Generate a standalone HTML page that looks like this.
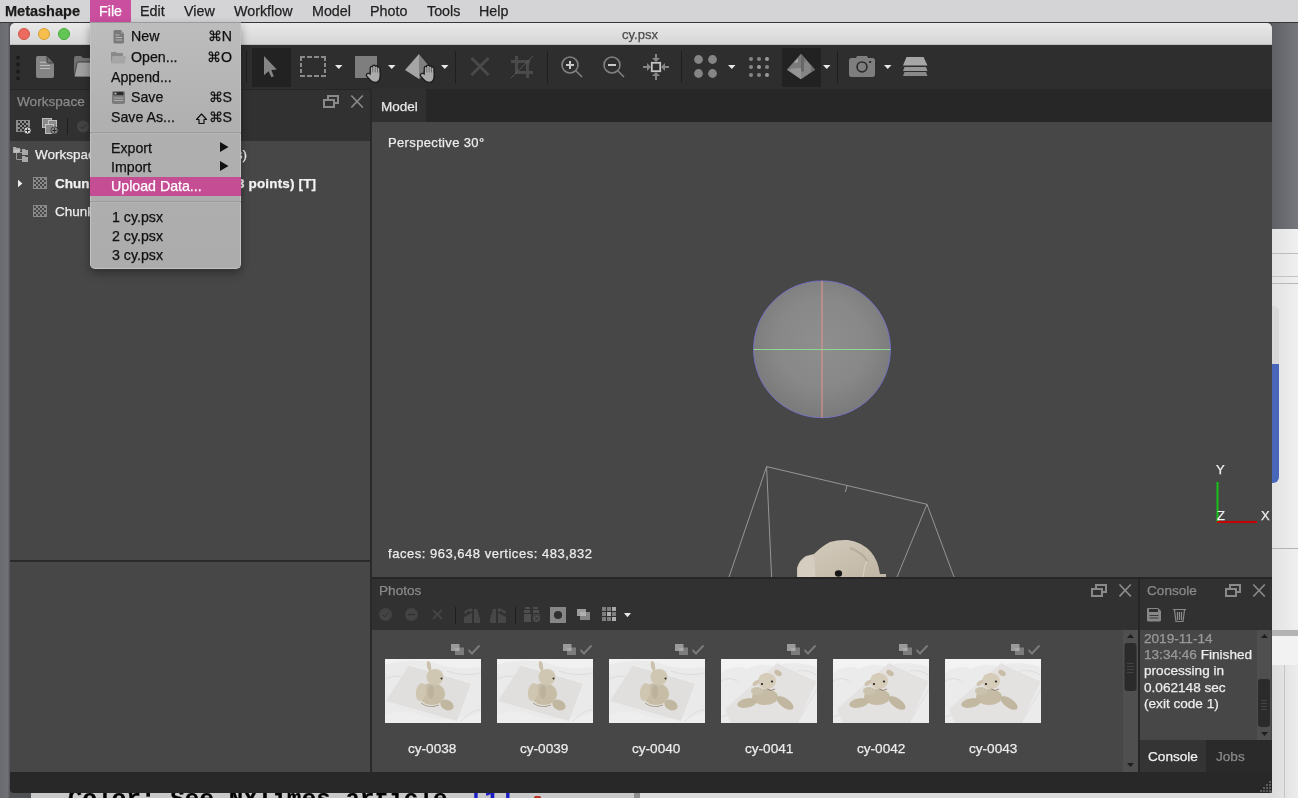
<!DOCTYPE html>
<html><head><meta charset="utf-8">
<style>
*{margin:0;padding:0;box-sizing:border-box}
html,body{width:1298px;height:798px;overflow:hidden;background:#66686d;font-family:"Liberation Sans",sans-serif;position:relative;-webkit-font-smoothing:antialiased}
.a{position:absolute}
.t{position:absolute;white-space:pre;line-height:1;-webkit-text-stroke:0.25px currentColor;will-change:transform}
svg{position:absolute;overflow:visible}
</style></head><body>
<!-- desktop -->
<div class="a" style="left:0;top:22px;width:1298px;height:776px;background:linear-gradient(90deg,#6a6b70 0,#707176 8px,#5d5e62 9px,#505155 10px)"></div>
<!-- background doc bottom -->
<div class="a" style="left:31px;top:793px;width:605px;height:5px;background:#c9c9c9;overflow:hidden">
 <div class="t" style="left:37px;top:-5px;font-family:'Liberation Mono',monospace;font-weight:700;font-size:24px;color:#000;letter-spacing:0.2px">Color: See NYTimes article</div>
 <div class="t" style="left:439px;top:-5px;font-family:'Liberation Mono',monospace;font-weight:700;font-size:24px;color:#1a1ac8;letter-spacing:0.2px">[1]</div>
 <div class="a" style="left:503px;top:3px;width:7px;height:3px;background:#c0302a;border-radius:3px"></div>
</div>
<div class="a" style="left:634px;top:793px;width:6px;height:5px;background:#8e8e8e"></div>
<div class="a" style="left:640px;top:793px;width:632px;height:5px;background:#dcdcdc"></div>
<!-- right background window -->
<div class="a" style="left:1272px;top:22px;width:26px;height:207px;background:linear-gradient(90deg,#5f6065,#76777c)"></div>
<div class="a" style="left:1272px;top:229px;width:26px;height:569px;background:linear-gradient(90deg,#e2e2e2,#f0f0f0)"></div>
<div class="a" style="left:1272px;top:253px;width:26px;height:1px;background:#bcbcbc"></div>
<div class="a" style="left:1272px;top:276px;width:26px;height:1px;background:#c4c4c4"></div>
<div class="a" style="left:1272px;top:283px;width:26px;height:1px;background:#b8b8b8"></div>
<div class="a" style="left:1264px;top:306px;width:15px;height:177px;background:#d8d8d8;border-radius:6px"></div>
<div class="a" style="left:1264px;top:364px;width:15px;height:119px;background:#4866ba;border-radius:0 0 6px 6px"></div>
<div class="a" style="left:1272px;top:548px;width:26px;height:1px;background:#b4b4b4"></div>
<div class="a" style="left:1272px;top:630px;width:26px;height:6px;background:#b3b3b3"></div>
<div class="a" style="left:1272px;top:636px;width:26px;height:29px;background:#f2f2f2"></div>
<div class="a" style="left:1272px;top:665px;width:26px;height:133px;background:linear-gradient(90deg,#dcdcdc,#ececec)"></div>
<div class="a" style="left:1284px;top:665px;width:1px;height:133px;background:#c4c4c4"></div>

<!-- menubar -->
<div class="a" style="left:0;top:0;width:1298px;height:23px;background:#d4d4d7;border-bottom:1px solid #36363a"></div>
<div class="t" style="left:5px;top:4px;font-size:14.5px;font-weight:700;color:#1a1a1a">Metashape</div>
<div class="a" style="left:90px;top:0;width:41px;height:22px;background:#cb4f9f"></div>
<div class="t" style="left:99px;top:4px;font-size:14.3px;color:#fff">File</div>
<div class="t" style="left:140px;top:4px;font-size:14.3px;color:#222">Edit</div>
<div class="t" style="left:184px;top:4px;font-size:14.3px;color:#222">View</div>
<div class="t" style="left:234px;top:4px;font-size:14.3px;color:#222">Workflow</div>
<div class="t" style="left:312px;top:4px;font-size:14.3px;color:#222">Model</div>
<div class="t" style="left:370px;top:4px;font-size:14.3px;color:#222">Photo</div>
<div class="t" style="left:427px;top:4px;font-size:14.3px;color:#222">Tools</div>
<div class="t" style="left:479px;top:4px;font-size:14.3px;color:#222">Help</div>

<!-- window -->
<div class="a" style="left:10px;top:23px;width:1262px;height:770px;background:#474747;border-radius:5px 5px 4px 4px"></div>
<div class="a" style="left:10px;top:23px;width:1262px;height:22px;background:linear-gradient(#e9e9e9,#d6d6d6);border-bottom:1px solid #bdbdbd;border-radius:5px 5px 0 0"></div>
<div class="a" style="left:18px;top:28px;width:12px;height:12px;border-radius:50%;background:#ed6a5e;border:0.5px solid #d25448"></div>
<div class="a" style="left:38px;top:28px;width:12px;height:12px;border-radius:50%;background:#f5be4f;border:0.5px solid #d9a030"></div>
<div class="a" style="left:58px;top:28px;width:12px;height:12px;border-radius:50%;background:#62c655;border:0.5px solid #4aa83c"></div>
<div class="t" style="left:622px;top:28px;font-size:13px;color:#4a4a4a">cy.psx</div>

<!-- toolbar -->
<div class="a" style="left:10px;top:45px;width:1262px;height:44px;background:#2e2e2e"></div>




<!-- left dock -->
<div class="a" style="left:10px;top:89px;width:360px;height:52px;background:#313131"></div>
<div class="a" style="left:10px;top:89px;width:1262px;height:1px;background:#262626"></div>
<div class="t" style="left:17px;top:94.5px;font-size:13.6px;color:#8a8a8a">Workspace</div>
<div class="a" style="left:10px;top:141px;width:360px;height:419px;background:#474747"></div>
<div class="a" style="left:10px;top:560px;width:360px;height:2px;background:#2a2a2a"></div>
<div class="a" style="left:10px;top:562px;width:360px;height:210px;background:#474747"></div>
<!-- vertical splitter -->
<div class="a" style="left:370px;top:89px;width:2px;height:683px;background:#292929"></div>

<!-- model tab bar -->
<div class="a" style="left:372px;top:89px;width:900px;height:33px;background:#272727"></div>
<div class="a" style="left:372px;top:89px;width:54px;height:33px;background:#303030"></div>
<div class="t" style="left:380.5px;top:99.5px;font-size:13.5px;color:#e6e6e6">Model</div>
<!-- viewport -->
<div class="a" style="left:372px;top:122px;width:900px;height:455px;background:#474747"></div>
<div class="t" style="left:388px;top:135.5px;font-size:13px;letter-spacing:0.35px;color:#ececec">Perspective 30°</div>
<div class="t" style="left:388px;top:546.5px;font-size:13px;letter-spacing:0.52px;color:#ececec">faces: 963,648 vertices: 483,832</div>

<!-- horizontal splitter -->
<div class="a" style="left:372px;top:577px;width:900px;height:2px;background:#262626"></div>

<!-- photos panel -->
<div class="a" style="left:372px;top:579px;width:766px;height:51px;background:#313131"></div>
<div class="t" style="left:379px;top:584px;font-size:13.6px;color:#8a8a8a">Photos</div>
<div class="a" style="left:372px;top:630px;width:766px;height:142px;background:#474747"></div>
<div class="a" style="left:1138px;top:579px;width:2px;height:193px;background:#262626"></div>

<!-- console panel -->
<div class="a" style="left:1140px;top:579px;width:132px;height:51px;background:#313131"></div>
<div class="t" style="left:1147px;top:584px;font-size:13.6px;color:#8a8a8a">Console</div>
<div class="a" style="left:1140px;top:630px;width:132px;height:110px;background:#474747"></div>
<div class="a" style="left:1140px;top:740px;width:132px;height:32px;background:#2a2a2a"></div>

<!-- status bar -->
<div class="a" style="left:10px;top:772px;width:1262px;height:21px;background:#282828;border-radius:0 0 4px 4px"></div>
<!-- toolbar icons -->
<svg style="left:0;top:0" width="1298" height="140" viewBox="0 0 1298 140">
 <g fill="#1c1c1c"><circle cx="18" cy="57.5" r="2"/><circle cx="18" cy="64.5" r="2"/><circle cx="18" cy="71.5" r="2"/><circle cx="18" cy="78.5" r="2"/></g>
 <!-- new doc -->
 <path d="M38 56 H47 L54 63 V76 Q54 78 52 78 H38 Q36 78 36 76 V58 Q36 56 38 56 Z" fill="#858585"/>
 <path d="M47 56 V61.5 Q47 63 48.5 63 H54 Z" fill="#6f6f6f" stroke="#2e2e2e" stroke-width="0.8"/>
 <g stroke="#c4c4c4" stroke-width="0.9"><line x1="40" y1="62.3" x2="46.5" y2="62.3"/><line x1="40" y1="65.5" x2="50" y2="65.5"/><line x1="40" y1="68.5" x2="50" y2="68.5"/></g>
 <!-- folder -->
 <path d="M74 58 Q74 56 76 56 H81 L83 58 H92 V76 H74 Z" fill="#707070"/>
 <path d="M77 63 Q77.5 62 79 62 H92 V77 H75 Q74 77 74.3 76 Z" fill="#a0a0a0" stroke="#2e2e2e" stroke-width="0.8"/>
 <!-- separators -->
 <g stroke="#1e1e1e" stroke-width="1"><line x1="246.5" y1="51" x2="246.5" y2="83"/><line x1="455.5" y1="51" x2="455.5" y2="83"/><line x1="547.5" y1="51" x2="547.5" y2="83"/><line x1="681.5" y1="51" x2="681.5" y2="83"/><line x1="837.5" y1="51" x2="837.5" y2="83"/></g>
 <!-- selected bgs -->
 <rect x="252" y="48" width="39" height="39" fill="#222222"/>
 <rect x="782" y="48" width="39" height="39" fill="#222222"/>
 <!-- arrow cursor -->
 <path d="M264 56 L276.8 69.6 L271.3 70 L273.8 76.2 L271.4 77.2 L268.6 71.2 L264 75.2 Z" fill="#858585"/>
 <!-- dashed rect -->
 <g fill="#8a8a8a"><path d="M300 56 H305 V58 H302 V61 H300 Z"/><path d="M326 56 H321 V58 H324 V61 H326 Z"/><rect x="307" y="56" width="5" height="2"/><rect x="314" y="56" width="5" height="2"/><rect x="300" y="75" width="5" height="2"/><rect x="307" y="75" width="5" height="2"/><rect x="314" y="75" width="5" height="2"/><rect x="321" y="75" width="5" height="2"/><rect x="300" y="63" width="2" height="4"/><rect x="300" y="69" width="2" height="4"/><rect x="324" y="63" width="2" height="4"/><rect x="324" y="69" width="2" height="4"/></g>
 <!-- dropdown triangles -->
 <g fill="#e8e8e8"><path d="M335 65 H342.5 L338.75 69 Z"/><path d="M388 65 H395.5 L391.75 69 Z"/><path d="M441 65 H448.5 L444.75 69 Z"/><path d="M728 65 H735.5 L731.75 69 Z"/><path d="M823 65 H830.5 L826.75 69 Z"/><path d="M884 65 H891.5 L887.75 69 Z"/></g>
 <!-- square + hand -->
 <rect x="355" y="56" width="22" height="22" fill="#7e7e7e"/>
 <!-- pyramid + hand -->
 <path d="M419 54 L405 70 L419 79 Z" fill="#a5a5a5"/><path d="M419 54 L428 65 L428 74 L419 79 Z" fill="#7f7f7f"/>
 <g id="hand">
  <g fill="#1c1c1c" stroke="#1c1c1c" stroke-width="2.6" stroke-linejoin="round"><rect x="370.9" y="67" width="1.8" height="9" rx="0.9"/><rect x="373.1" y="65.8" width="1.8" height="9" rx="0.9"/><rect x="375.3" y="66.4" width="1.8" height="9" rx="0.9"/><rect x="377.5" y="67.8" width="1.8" height="9" rx="0.9"/>
   <path d="M370.9 72 H379.3 V77 Q379.3 81.7 374.8 81.7 Q372 81.7 370.6 79.6 L367.3 75.9 Q366.6 74.7 367.7 74.1 Q369 73.5 370.9 75.2 Z"/></g>
  <g fill="#ababab"><rect x="370.9" y="67" width="1.8" height="9" rx="0.9"/><rect x="373.1" y="65.8" width="1.8" height="9" rx="0.9"/><rect x="375.3" y="66.4" width="1.8" height="9" rx="0.9"/><rect x="377.5" y="67.8" width="1.8" height="9" rx="0.9"/>
   <path d="M370.9 72.5 H379.3 V77 Q379.3 81.7 374.8 81.7 Q372 81.7 370.6 79.6 L367.3 75.9 Q366.6 74.7 367.7 74.1 Q369 73.5 370.9 75.2 Z"/></g>
 </g>
 <use href="#hand" x="54" y="0"/>
 <!-- X -->
 <path d="M471.5 58 L488.5 75 M488.5 58 L471.5 75" stroke="#4a4a4a" stroke-width="2.9"/>
 <!-- crop -->
 <g fill="#4a4a4a"><rect x="515" y="56" width="3" height="18"/><rect x="511" y="60" width="19" height="3"/><rect x="526" y="60" width="3" height="18"/><rect x="515" y="71" width="18" height="3"/></g>
 <line x1="511" y1="78" x2="533" y2="56" stroke="#5e5e5e" stroke-width="0.8"/>
 <!-- zoom in/out -->
 <g fill="none" stroke="#808080" stroke-width="1.6"><circle cx="570" cy="65" r="8"/><line x1="575.8" y1="70.8" x2="582" y2="77"/><circle cx="612" cy="65" r="8"/><line x1="617.8" y1="70.8" x2="624" y2="77"/></g>
 <g stroke="#c8c8c8" stroke-width="2"><line x1="566" y1="65" x2="574" y2="65"/><line x1="570" y1="61" x2="570" y2="69"/><line x1="608" y1="65" x2="616" y2="65"/></g>
 <!-- fit -->
 <rect x="651.8" y="62.8" width="8.4" height="8.4" fill="none" stroke="#c4c4c4" stroke-width="1.8"/>
 <g fill="#858585"><path d="M655 54 h2 v4 h3 l-4 4 l-4 -4 h3 z"/><path d="M655 80 h2 v-4 h3 l-4 -4 l-4 4 h3 z"/><path d="M643 66 v2 h4 v3 l4 -4 l-4 -4 v3 z"/><path d="M669 66 v2 h-4 v3 l-4 -4 l4 -4 v3 z"/></g>
 <!-- 4 dots -->
 <g fill="#858585"><circle cx="698.5" cy="59.5" r="4.4"/><circle cx="712.5" cy="59.5" r="4.4"/><circle cx="698.5" cy="73.5" r="4.4"/><circle cx="712.5" cy="73.5" r="4.4"/></g>
 <!-- 9 dots -->
 <g fill="#858585"><circle cx="751" cy="59" r="2"/><circle cx="759" cy="59" r="2"/><circle cx="767" cy="59" r="2" fill="#9a9a9a"/><circle cx="751" cy="67" r="2"/><circle cx="759" cy="67" r="2" fill="#9a9a9a"/><circle cx="767" cy="67" r="2"/><circle cx="751" cy="75" r="2"/><circle cx="759" cy="75" r="2"/><circle cx="767" cy="75" r="2" fill="#9a9a9a"/></g>
 <!-- textured pyramid -->
 <path d="M801 53.8 L786.8 69.8 L801 79.2 Z" fill="#7b7b7b"/><path d="M801 53.8 L815 69.8 L801 79.2 Z" fill="#858585"/>
 <path d="M787.5 69.8 L791 69.8 L791 68.5 L795 68.5 L795 68 L801 68 L801 79.2 Z" fill="#949494"/>
 <path d="M794 62.6 L798 58.4 L798 62.6 Z" fill="#ababab"/>
 <path d="M801 54.2 L804 57.6 V71.5 H801 Z" fill="#676767"/>
 <path d="M804 61.5 H806 L804 59 Z" fill="#6e6e6e"/>
 <path d="M811 65.3 L815 69.8 L811 72.3 Z" fill="#6c6c6c"/>
 <!-- camera -->
 <path d="M851.5 58 H856 L857 55.9 H867 L868 58 H872.5 Q875 58 875 60.5 V74.4 Q875 76.9 872.5 76.9 H851.5 Q849 76.9 849 74.4 V60.5 Q849 58 851.5 58 Z" fill="#7e7e7e"/>
 <circle cx="862" cy="66.9" r="4.9" fill="none" stroke="#2c2c2c" stroke-width="1.7"/>
 <rect x="869.2" y="61" width="2" height="2" fill="#2c2c2c"/>
 <!-- stack -->
 <path d="M906.5 57 H923.5 L927.5 65.5 H903 Z" fill="#a6a6a6"/>
 <path d="M904.5 67 H926 L927.5 71 H903 Z" fill="#979797"/>
 <path d="M904.5 72 H926 L927.5 76 H903 Z" fill="#898989"/>
 <!-- workspace header: float + close -->
 <g fill="none" stroke="#8a8a8a" stroke-width="2"><path d="M328 99 V96 H338 V103 H335"/><rect x="324" y="100" width="10" height="7"/><path d="M351.3 95.5 L362.8 107.5 M362.8 95.5 L351.3 107.5" stroke-width="1.7"/></g>
 <!-- workspace toolbar -->
 <g fill="#8a8a8a">
  <rect x="16" y="120" width="14" height="12" fill="#8a8a8a"/>
 </g>
 <g fill="#2f2f2f"><rect x="18" y="121" width="2" height="2"/><rect x="22" y="121" width="2" height="2"/><rect x="26" y="121" width="2" height="2"/><rect x="20" y="123" width="2" height="2"/><rect x="24" y="123" width="2" height="2"/><rect x="18" y="125" width="2" height="2"/><rect x="22" y="125" width="2" height="2"/><rect x="26" y="125" width="2" height="2"/><rect x="20" y="127" width="2" height="2"/><rect x="24" y="127" width="2" height="2"/><rect x="18" y="129" width="2" height="2"/><rect x="22" y="129" width="2" height="2"/></g>
 <circle cx="27.5" cy="130.5" r="3.6" fill="#d8d8d8" stroke="#2f2f2f" stroke-width="0.8"/>
 <path d="M25.3 130.5 h4.4 M27.5 128.3 v4.4" stroke="#222" stroke-width="0.9"/>
 <rect x="42.5" y="118.5" width="9" height="9" fill="#8a8a8a" stroke="#c8c8c8" stroke-width="0.9"/>
 <rect x="48.5" y="120.5" width="8" height="8" fill="#8a8a8a" stroke="#c8c8c8" stroke-width="0.9"/>
 <rect x="45.5" y="124.5" width="8" height="9" fill="#8a8a8a" stroke="#c8c8c8" stroke-width="0.9"/>
 <circle cx="54.5" cy="130.5" r="3.6" fill="#8a8a8a" stroke="#2f2f2f" stroke-width="0.8"/>
 <path d="M52.3 130.5 h4.4 M54.5 128.3 v4.4" stroke="#222" stroke-width="0.9"/>
 <line x1="67.5" y1="118" x2="67.5" y2="135" stroke="#1e1e1e"/>
 <circle cx="83" cy="126.5" r="6" fill="#444"/>
 <path d="M80 126.5 L82.3 128.8 L86 124.5" fill="none" stroke="#2f2f2f" stroke-width="1"/>
</svg>

<!-- tree -->
<svg style="left:0;top:0" width="380" height="230">
 <g fill="none" stroke="#9a9a9a" stroke-width="1"><path d="M16.5 152.5 V159.5 H22 M20 152.5 H22"/></g>
 <g fill="#a8a8a8"><path d="M13 147 H16 L16.5 148 H20 V152.7 H13 Z"/><path d="M22 149 H25 L25.5 150 H28 V155 H22 Z"/><path d="M22 156 H25 L25.5 157 H28 V162 H22 Z"/></g>
 <path d="M14.5 149.5 H21 L19 152.7 H13 Z" fill="#c0c0c0"/>
 <path d="M18 179.8 L22.4 183.5 L18 187.2 Z" fill="#eeeeee"/>
 <g id="chk"><rect x="33" y="177" width="14" height="12" fill="#8a8a8a"/>
 <g fill="#474747"><rect x="34" y="178" width="2" height="2"/><rect x="38" y="178" width="2" height="2"/><rect x="42" y="178" width="2" height="2"/><rect x="36" y="180" width="2" height="2"/><rect x="40" y="180" width="2" height="2"/><rect x="44" y="180" width="2" height="2"/><rect x="34" y="182" width="2" height="2"/><rect x="38" y="182" width="2" height="2"/><rect x="42" y="182" width="2" height="2"/><rect x="36" y="184" width="2" height="2"/><rect x="40" y="184" width="2" height="2"/><rect x="44" y="184" width="2" height="2"/><rect x="34" y="186" width="2" height="2"/><rect x="38" y="186" width="2" height="2"/><rect x="42" y="186" width="2" height="2"/></g></g>
 <use href="#chk" x="0" y="28"/>
</svg>
<div class="t" style="left:35px;top:148px;font-size:13.5px;color:#ededed">Workspace (2 chunks)</div>
<div class="t" style="left:200px;top:148px;width:47px;text-align:right;font-size:13.5px;color:#ededed">ras)s)</div>
<div class="t" style="left:55px;top:177px;font-size:13.5px;font-weight:700;color:#f2f2f2">Chunk 1 (43 cam</div>
<div class="t" style="left:237px;top:177px;font-size:13.5px;font-weight:700;color:#f2f2f2;letter-spacing:0.15px">3 points) [T]</div>
<div class="t" style="left:55px;top:205px;font-size:13.5px;color:#ededed">Chunk 2</div>

<!-- viewport 3d -->
<svg style="left:0;top:0" width="1298" height="580">
 <defs><radialGradient id="sph" cx="0.5" cy="0.45" r="0.55"><stop offset="0" stop-color="#8e8e8e"/><stop offset="0.6" stop-color="#888"/><stop offset="1" stop-color="#7a7a7a"/></radialGradient></defs>
 <circle cx="822" cy="349.3" r="68.4" fill="url(#sph)" stroke="#7774d0" stroke-width="0.85"/>
 <line x1="822" y1="281" x2="822" y2="417.7" stroke="#e89292" stroke-width="1"/>
 <line x1="753.6" y1="349.5" x2="890.4" y2="349.5" stroke="#8fd88f" stroke-width="1"/>
 <g stroke="#9e9e9e" stroke-width="0.9" fill="none"><path d="M729 577 L766.6 466.6 L771.6 577 M766.6 466.6 L927 504.3 L897 577 M927 504.3 L954 577 M847 485.8 L845.4 492"/></g>
 <defs><linearGradient id="ted" x1="0" y1="0" x2="1" y2="1"><stop offset="0" stop-color="#d2cabd"/><stop offset="0.6" stop-color="#c8bfae"/><stop offset="1" stop-color="#bdb4a3"/></linearGradient></defs>
 <path d="M797 577 L797 568 Q799 560 806 556 L814 554 Q822 546 830 542 Q838 539.5 848 540 Q862 542 871 552 Q878 560 880 574 L886 574 L886 577 Z" fill="url(#ted)"/>
 <path d="M798 577 L798 568 Q800 561 806 557 L813 555 Q816 565 815 577 Z" fill="#d4cdc0"/>
 <path d="M850 548 Q862 552 868 562" stroke="#b6ad9c" stroke-width="2" fill="none"/>
 <path d="M863 577 Q864 566 867 561" stroke="#e0dad0" stroke-width="0.8" fill="none"/>
 <ellipse cx="838.5" cy="573.5" rx="3.6" ry="3.3" fill="#161616"/>
 <line x1="1217.5" y1="482" x2="1217.5" y2="522" stroke="#16c316" stroke-width="2"/>
 <line x1="1217" y1="522" x2="1257" y2="522" stroke="#c80000" stroke-width="2"/>
</svg>
<div class="t" style="left:1216px;top:463px;font-size:13px;color:#f0f0f0">Y</div>
<div class="t" style="left:1217px;top:509px;font-size:13px;color:#f0f0f0">Z</div>
<div class="t" style="left:1261px;top:509px;font-size:13px;color:#f0f0f0">X</div>


<!-- photos panel -->
<svg style="left:0;top:0" width="1298" height="798">
 <defs>
  <symbol id="thumb" viewBox="0 0 96 64" width="96" height="64">
   <rect width="96" height="64" fill="#eaeaea"/>
   <path d="M0 0 H96 V8 Q70 12 50 4 Q25 -2 0 6 Z" fill="#f1f1f1"/>
   <path d="M0 56 Q20 48 40 58 Q60 64 96 54 V64 H0 Z" fill="#eeeeee"/>
   <path d="M62 12 Q78 18 96 14 M0 20 Q12 14 22 20 M76 62 Q86 52 96 50" stroke="#d8d8d8" stroke-width="0.8" fill="none"/>
   <path d="M24 6 L86 24 L72 62 L1 42 Z" fill="#e0dfde"/>
   <path d="M24 6 L86 24" stroke="#f4f4f4" stroke-width="0.6"/>
   <ellipse cx="47" cy="35" rx="13" ry="11" fill="#c7bda7"/>
   <ellipse cx="62" cy="46" rx="7" ry="5" transform="rotate(25 62 46)" fill="#c1b7a0"/>
   <ellipse cx="36" cy="33" rx="5" ry="9" transform="rotate(10 36 33)" fill="#cfc6b1"/>
   <ellipse cx="50" cy="18" rx="8.5" ry="8" fill="#d0c7b2"/>
   <ellipse cx="44" cy="7" rx="2" ry="5" transform="rotate(-10 44 7)" fill="#cbc1ac"/>
   <ellipse cx="46" cy="33" rx="3" ry="7" fill="#bcb29b"/>
   <circle cx="56.5" cy="19.5" r="1" fill="#2a2a2a"/>
   <path d="M36 44 Q44 50 54 46" stroke="#aaa08a" stroke-width="1" fill="none"/>
  </symbol>
  <symbol id="thumb2" viewBox="0 0 96 64" width="96" height="64">
   <rect width="96" height="64" fill="#ebebeb"/>
   <path d="M0 14 Q14 4 26 10 Q40 2 54 8 Q70 0 96 8 V0 H0 Z" fill="#f3f3f3"/>
   <path d="M0 22 Q10 16 18 24 M70 14 Q82 8 96 16 M0 58 Q12 52 20 60" stroke="#d9d9d9" stroke-width="0.8" fill="none"/>
   <path d="M4 50 L56 4 L96 22 L76 64 L10 64 Z" fill="#e4e2e1"/>
   <path d="M56 4 L96 22" stroke="#f2f2f2" stroke-width="0.6"/>
   <path d="M76 64 L96 30" stroke="#cfcfcf" stroke-width="0.5"/>
   <ellipse cx="44" cy="38" rx="13" ry="8" fill="#c6bca6"/>
   <ellipse cx="26" cy="44" rx="10" ry="4.5" transform="rotate(-12 26 44)" fill="#c3b9a2"/>
   <ellipse cx="64" cy="44" rx="10" ry="4.5" transform="rotate(35 64 44)" fill="#c1b7a0"/>
   <ellipse cx="36" cy="32" rx="6" ry="4" fill="#cbc2ad"/>
   <ellipse cx="46" cy="22" rx="9" ry="8" fill="#d5ccb9"/>
   <ellipse cx="35" cy="24" rx="4" ry="2" transform="rotate(-35 35 24)" fill="#cdc3ae"/>
   <ellipse cx="57" cy="14" rx="4" ry="2.6" transform="rotate(30 57 14)" fill="#c8beA8"/>
   <circle cx="41" cy="25" r="1.1" fill="#222"/><circle cx="51" cy="22.5" r="1.1" fill="#222"/>
   <path d="M46 30 Q50 33 54 30" stroke="#8a806c" stroke-width="0.9" fill="none"/>
  </symbol>
  <g id="pic"><rect x="451" y="644" width="8.5" height="7" fill="#9a9a9a"/><rect x="455" y="647.5" width="9" height="7.5" fill="#7c7c7c"/><rect x="455" y="647.5" width="4.5" height="3.5" fill="#a8a8a8"/>
   <path d="M468.5 650 L472 653.5 L479.5 645.5" fill="none" stroke="#7a7a7a" stroke-width="2"/></g>
 </defs>
 <use href="#thumb" x="385" y="659"/>
 <use href="#thumb" x="497" y="659"/>
 <use href="#thumb" x="609" y="659"/>
 <use href="#thumb2" x="721" y="659"/>
 <use href="#thumb2" x="833" y="659"/>
 <use href="#thumb2" x="945" y="659"/>
 <use href="#pic" x="0" y="0"/><use href="#pic" x="112" y="0"/><use href="#pic" x="224" y="0"/><use href="#pic" x="336" y="0"/><use href="#pic" x="448" y="0"/><use href="#pic" x="560" y="0"/>
 <!-- photos header icons -->
 <g fill="none" stroke="#8a8a8a" stroke-width="2"><path d="M1096 588 V585 H1106 V592 H1103"/><rect x="1092" y="589" width="10" height="7"/><path d="M1119.5 584.5 L1130.8 596.3 M1130.8 584.5 L1119.5 596.3" stroke-width="1.7"/></g>
 <g fill="none" stroke="#8a8a8a" stroke-width="2"><path d="M1230 588 V585 H1240 V592 H1237"/><rect x="1226" y="589" width="10" height="7"/><path d="M1253.3 584.5 L1264.8 596.5 M1264.8 584.5 L1253.3 596.5" stroke-width="1.7"/></g>
 <!-- photos toolbar -->
 <circle cx="385.5" cy="614.5" r="6.5" fill="#444"/><path d="M382.5 614.5 L384.8 616.8 L388.5 612.5" fill="none" stroke="#2f2f2f" stroke-width="1"/>
 <circle cx="411.5" cy="614.5" r="6.5" fill="#444"/><line x1="408" y1="614.5" x2="415" y2="614.5" stroke="#2f2f2f" stroke-width="1.3"/>
 <path d="M433 610 L442 619 M442 610 L433 619" stroke="#444" stroke-width="2"/>
 <g stroke="#1e1e1e"><line x1="455.5" y1="607" x2="455.5" y2="624"/><line x1="515.5" y1="607" x2="515.5" y2="624"/></g>
 <g fill="#474747"><path d="M464 623 V617 L472 613 V623 Z"/><path d="M474 609 H477 L480 619 V623 H474 Z"/><path d="M464 613 Q465 609 470 609 V607 L473 610 L470 613 V611 Q467 611 466 614 Z"/>
 <path d="M506 623 V617 L498 613 V623 Z"/><path d="M496 609 H493 L490 619 V623 H496 Z"/><path d="M506 613 Q505 609 500 609 V607 L497 610 L500 613 V611 Q503 611 504 614 Z"/></g>
 <g fill="#4e4e4e"><rect x="525" y="607" width="5" height="2"/><rect x="533" y="607" width="5" height="2"/><rect x="524" y="610" width="6" height="3"/><rect x="533" y="610" width="6" height="3"/><rect x="524" y="614" width="7" height="8"/><rect x="533" y="614" width="7" height="3"/></g>
 <circle cx="536.5" cy="618.5" r="4" fill="#4e4e4e" stroke="#2f2f2f" stroke-width="0.8"/><path d="M535 617 l3 3 m0 -3 l-3 3" stroke="#222" stroke-width="0.7"/>
 <rect x="550" y="607" width="16" height="16" fill="#878787"/><circle cx="558" cy="615" r="4.1" fill="#2f2f2f"/>
 <rect x="577" y="609" width="9" height="7" fill="#9c9c9c"/><rect x="580" y="612" width="10" height="8" fill="#858585"/><rect x="580" y="612" width="6" height="4" fill="#b0b0b0"/>
 <g fill="#7e7e7e"><rect x="602" y="607" width="4" height="4"/><rect x="607" y="607" width="4" height="4"/><rect x="612" y="607" width="4" height="4" fill="#a8a8a8"/><rect x="602" y="612" width="4" height="4"/><rect x="607" y="612" width="4" height="4" fill="#b0b0b0"/><rect x="612" y="612" width="4" height="4"/><rect x="602" y="617" width="4" height="4"/><rect x="607" y="617" width="4" height="4"/><rect x="612" y="617" width="4" height="4" fill="#b0b0b0"/></g>
 <path d="M624 613 H631 L627.5 617.3 Z" fill="#e8e8e8"/>
 <!-- photos scrollbar -->
 <rect x="1123" y="630" width="15" height="142" fill="#4f4f4f"/>
 <path d="M1127 638 H1134 L1130.5 634 Z" fill="#1e1e1e"/>
 <path d="M1127 763 H1134 L1130.5 767 Z" fill="#1e1e1e"/>
 <rect x="1124.5" y="643" width="12" height="48" rx="3" fill="#2b2b2b"/>
 <g stroke="#4a4a4a" stroke-width="0.8"><line x1="1127" y1="663.5" x2="1134" y2="663.5"/><line x1="1127" y1="666.5" x2="1134" y2="666.5"/><line x1="1127" y1="669.5" x2="1134" y2="669.5"/><line x1="1127" y1="672.5" x2="1134" y2="672.5"/></g>
 <!-- console toolbar -->
 <path d="M1148 608 H1158 L1161 611 V620 Q1161 621.5 1159.5 621.5 H1148.5 Q1147 621.5 1147 620 V609 Q1147 608 1148 608 Z" fill="#888"/>
 <rect x="1149" y="609" width="9" height="3" fill="#2f2f2f"/><g stroke="#2f2f2f" stroke-width="0.9"><line x1="1149.5" y1="615.5" x2="1158.5" y2="615.5"/><line x1="1149.5" y1="618" x2="1158.5" y2="618"/></g>
 <path d="M1173 609.5 H1186 M1174.5 610 L1176 621.5 H1183 L1184.5 610 M1177.5 612 V620 M1179.5 612 V620 M1181.5 612 V620" fill="none" stroke="#8a8a8a" stroke-width="1.2"/>
 <!-- console scrollbar -->
 <rect x="1257" y="630" width="14" height="110" fill="#4f4f4f"/>
 <path d="M1261 638 H1268 L1264.5 634 Z" fill="#1e1e1e"/>
 <path d="M1261 732 H1268 L1264.5 736 Z" fill="#1e1e1e"/>
 <rect x="1258" y="679" width="12" height="48" rx="3" fill="#2b2b2b"/>
 <g stroke="#4a4a4a" stroke-width="0.8"><line x1="1261" y1="700.5" x2="1267" y2="700.5"/><line x1="1261" y1="703.5" x2="1267" y2="703.5"/><line x1="1261" y1="706.5" x2="1267" y2="706.5"/><line x1="1261" y1="709.5" x2="1267" y2="709.5"/></g>
 <!-- resize grip -->
 <g fill="#5c5c5c"><rect x="1269" y="781" width="2" height="2"/><rect x="1266" y="784" width="2" height="2"/><rect x="1269" y="784" width="2" height="2"/><rect x="1263" y="787" width="2" height="2"/><rect x="1266" y="787" width="2" height="2"/><rect x="1269" y="787" width="2" height="2"/><rect x="1260" y="790" width="2" height="2"/><rect x="1263" y="790" width="2" height="2"/><rect x="1266" y="790" width="2" height="2"/><rect x="1269" y="790" width="2" height="2"/></g>
</svg>
<div class="t" style="left:408px;top:742px;font-size:13.6px;color:#ececec">cy-0038</div>
<div class="t" style="left:520px;top:742px;font-size:13.6px;color:#ececec">cy-0039</div>
<div class="t" style="left:632px;top:742px;font-size:13.6px;color:#ececec">cy-0040</div>
<div class="t" style="left:745px;top:742px;font-size:13.6px;color:#ececec">cy-0041</div>
<div class="t" style="left:857px;top:742px;font-size:13.6px;color:#ececec">cy-0042</div>
<div class="t" style="left:969px;top:742px;font-size:13.6px;color:#ececec">cy-0043</div>
<div class="t" style="left:1144px;top:630.5px;font-size:13.6px;line-height:16.2px;color:#ededed"><span style="color:#9a9a9a">2019-11-14
13:34:46</span> Finished
processing in
0.062148 sec
(exit code 1)</div>
<div class="a" style="left:1140px;top:740px;width:66px;height:32px;background:#343434"></div>
<div class="t" style="left:1148px;top:750px;font-size:13.6px;color:#f0f0f0">Console</div>
<div class="t" style="left:1215.5px;top:750px;font-size:13.6px;color:#8a8a8a">Jobs</div>


<!-- file menu -->
<div class="a" style="left:90px;top:22px;width:151px;height:247px;background:linear-gradient(#bdbdbd,#b0b0b0 40%,#acacac);border-radius:0 0 5px 5px;box-shadow:0 4px 10px rgba(0,0,0,0.35);border:1px solid #c2c2c2;border-top:none"></div>
<div class="a" style="left:90px;top:22px;width:151px;height:1px;background:#9a9a9a"></div>
<div class="a" style="left:90px;top:132px;width:151px;height:1px;background:#9c9c9c"></div>
<div class="a" style="left:90px;top:133px;width:151px;height:1px;background:#b4b4b4"></div>
<div class="a" style="left:90px;top:177px;width:151px;height:19px;background:#c44d93"></div>
<div class="a" style="left:90px;top:201px;width:151px;height:1px;background:#9c9c9c"></div>
<div class="a" style="left:90px;top:202px;width:151px;height:1px;background:#b4b4b4"></div>
<svg style="left:0;top:0" width="260" height="280">
 <path d="M115 30 H121 L124 33.5 V42 Q124 43.5 122.5 43.5 H115 Q113.5 43.5 113.5 42 V31.5 Q113.5 30 115 30 Z" fill="#7a7a7a"/>
 <path d="M121 30 V33.5 H124" fill="#9a9a9a"/>
 <g stroke="#c4c4c4" stroke-width="0.8"><line x1="115.5" y1="35" x2="119.5" y2="35"/><line x1="115.5" y1="37.5" x2="122" y2="37.5"/><line x1="115.5" y1="40" x2="122" y2="40"/></g>
 <path d="M111 53 Q111 52 112 52 H116 L117 53 H123 V62 H111 Z" fill="#8a8a8a"/>
 <path d="M112.5 56 H126 L125 63.5 H111 Z" fill="#a6a6a6"/>
 <rect x="112" y="91" width="13" height="13" rx="1.8" fill="#7c7c7c"/>
 <rect x="113.5" y="92" width="10" height="3.2" fill="#2c2c2c"/><rect x="114.5" y="92.6" width="2" height="1.8" fill="#bbb"/>
 <g stroke="#b8b8b8" stroke-width="0.8"><line x1="114" y1="98" x2="123" y2="98"/><line x1="114" y1="100.5" x2="123" y2="100.5"/></g>
 <path d="M220 142 L228.5 147 L220 152 Z" fill="#111"/>
 <path d="M220 161 L228.5 166 L220 171 Z" fill="#111"/>
</svg>
<div class="t" style="left:131px;top:29px;font-size:14.2px;color:#111">New</div>
<div class="t" style="left:131px;top:50px;font-size:14.2px;color:#111">Open...</div>
<div class="t" style="left:111px;top:70px;font-size:14.2px;color:#111">Append...</div>
<div class="t" style="left:131px;top:90px;font-size:14.2px;color:#111">Save</div>
<div class="t" style="left:111px;top:110px;font-size:14.2px;color:#111">Save As...</div>
<div class="t" style="left:180px;top:29px;width:52px;text-align:right;font-size:14.2px;color:#111">⌘N</div>
<div class="t" style="left:180px;top:50px;width:52px;text-align:right;font-size:14.2px;color:#111">⌘O</div>
<div class="t" style="left:180px;top:90px;width:52px;text-align:right;font-size:14.2px;color:#111">⌘S</div>
<div class="t" style="left:180px;top:110px;width:52px;text-align:right;font-size:14.2px;color:#111">⌘S</div>
<svg style="left:0;top:0" width="260" height="140"><path d="M201.5 114 L196.5 119.5 H199 V123.5 H204 V119.5 H206.5 Z" fill="none" stroke="#111" stroke-width="1.2" stroke-linejoin="round"/></svg>
<div class="t" style="left:111px;top:141px;font-size:14.2px;color:#111">Export</div>
<div class="t" style="left:111px;top:160px;font-size:14.2px;color:#111">Import</div>
<div class="t" style="left:111px;top:179px;font-size:14.2px;color:#fff">Upload Data...</div>
<div class="t" style="left:112px;top:210px;font-size:14.2px;color:#111">1 cy.psx</div>
<div class="t" style="left:112px;top:229px;font-size:14.2px;color:#111">2 cy.psx</div>
<div class="t" style="left:112px;top:248px;font-size:14.2px;color:#111">3 cy.psx</div>

</body></html>
